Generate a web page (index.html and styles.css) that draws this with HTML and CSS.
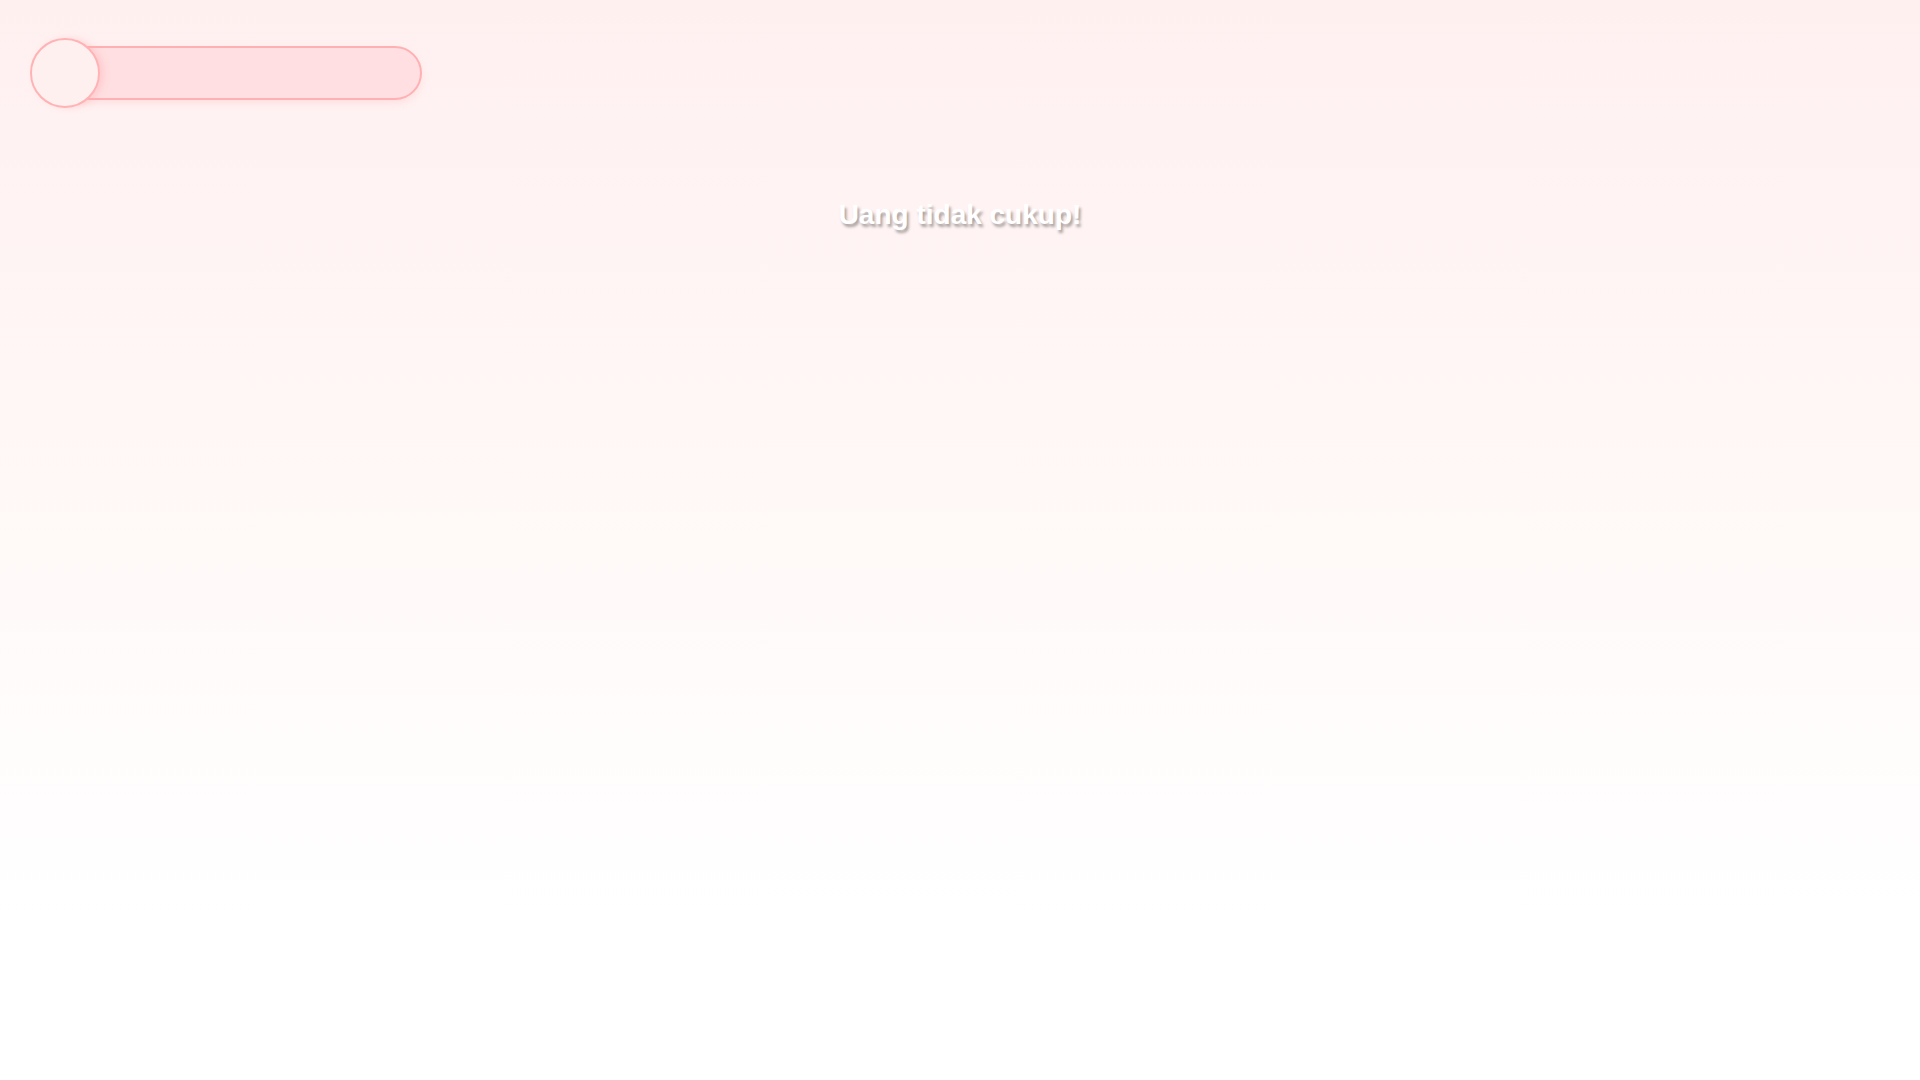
FILE: index.html
```html
<!DOCTYPE html>
<html lang="id">
<head>
  <meta charset="UTF-8" />
  <title>Game</title>
  <meta name="viewport" content="width=device-width, initial-scale=1.0" />
  <link rel="stylesheet" href="styles.css">
</head>
<body>
  <div class="hud">
    <div class="meter">
      <div class="meter-knob"></div>
      <div class="meter-bar"></div>
    </div>
  </div>

  <div class="notice">Uang tidak cukup!</div>
</body>
</html>
```
FILE: styles.css
```css
* {
  box-sizing: border-box;
}

html,
body {
  height: 100%;
}

body {
  margin: 0;
  font-family: 'Liberation Sans', Arial, sans-serif;
  background: linear-gradient(to bottom, #fff0f0 0%, #fff8f7 45%, #ffffff 85%);
  min-height: 100vh;
}

.hud {
  padding: 38px 0 0 30px;
}

.meter {
  display: flex;
  align-items: center;
  width: 392px;
  height: 70px;
}

.meter-knob {
  width: 70px;
  height: 70px;
  border-radius: 50%;
  background: #fff0f0;
  border: 2px solid #ffb3b5;
  box-shadow: 4px 0 6px rgba(255, 170, 175, 0.35);
  position: relative;
  z-index: 1;
  flex-shrink: 0;
}

.meter-bar {
  flex: 1;
  height: 54px;
  margin-left: -40px;
  background: #ffdfe1;
  border: 2px solid #ffb0b3;
  border-radius: 27px;
  box-shadow: 0 4px 6px rgba(255, 180, 185, 0.25);
}

.notice {
  margin-top: 91px;
  text-align: center;
  font-size: 28px;
  font-weight: bold;
  color: #ffffff;
  text-shadow: 2px 3px 3px rgba(0, 0, 0, 0.35);
}
```
